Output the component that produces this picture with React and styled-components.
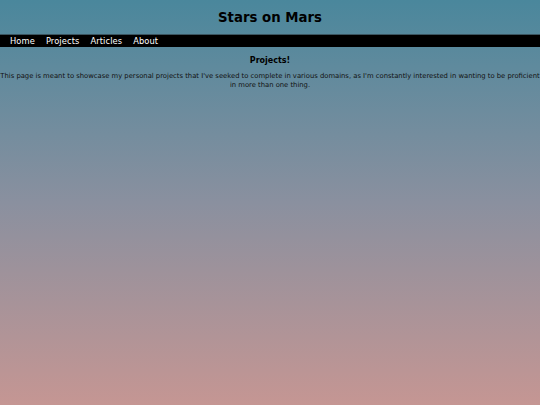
import React from 'react';
import styled, { createGlobalStyle } from 'styled-components';

/*
* Global styles.
*/

const GlobalStyle = createGlobalStyle`
  html, body {
    margin: 0;
    padding: 0;
  }

  body {
    min-height: 405px;
    font-family: "DejaVu Sans", Verdana, sans-serif;
    color: #000;
    background: linear-gradient(to bottom, #4a879c 0%, #8a909f 50%, #c59693 100%);
    background-attachment: fixed;
  }
`;

/*
* App component definition.
*/

const navItems = ['Home', 'Projects', 'Articles', 'About'];

export default function App() {
  return (
    <>
      <GlobalStyle />
      <StyledHeader>
        <StyledTitle>Stars on Mars</StyledTitle>
      </StyledHeader>
      <StyledNav>
        {navItems.map((item) => (
          <StyledNavLink key={item} href="#">{item}</StyledNavLink>
        ))}
      </StyledNav>
      <StyledMain>
        <StyledHeading>Projects!</StyledHeading>
        <StyledIntro>
          This page is meant to showcase my personal projects that I've seeked to complete in various
          domains, as I'm constantly interested in wanting to be proficient in more than one thing.
        </StyledIntro>
      </StyledMain>
    </>
  );
}

/*
* Styles
*/

const StyledHeader = styled.header`
  height: 34px;
  display: flex;
  align-items: center;
  justify-content: center;
  border-bottom: 1px solid #3b5560;
`;

const StyledTitle = styled.h1`
  margin: 0;
  font-size: 13.3px;
  font-weight: bold;
`;

const StyledNav = styled.nav`
  display: flex;
  align-items: center;
  height: 12px;
  padding: 0 10px;
  gap: 11px;
  background: #000;
`;

const StyledNavLink = styled.a`
  font-size: 8.3px;
  letter-spacing: 0.1px;
  color: #fff;
  text-decoration: none;
`;

const StyledMain = styled.main`
  text-align: center;
`;

const StyledHeading = styled.h2`
  margin: 9px 0 0;
  font-size: 8px;
  font-weight: bold;
  line-height: 10px;
`;

const StyledIntro = styled.p`
  margin: 6px 0 0;
  font-size: 6.8px;
  line-height: 8.5px;
  color: #111;
`;
